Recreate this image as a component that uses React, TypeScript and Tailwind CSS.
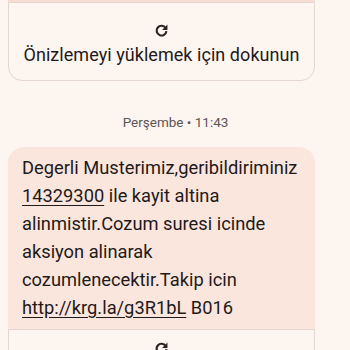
const RefreshIcon = () => (
  <svg width="15" height="15" viewBox="0 0 24 24" fill="none">
    <path
      d="M18.6 8A7.8 7.8 0 1 0 19.8 13"
      stroke="#2b2220"
      strokeWidth="3.4"
      strokeLinecap="butt"
    />
    <path d="M21.5 2.5v8.5h-8.5z" fill="#2b2220" />
  </svg>
);

const App = () => {
  return (
    <div className="w-[350px] h-[350px] overflow-hidden bg-[#fdf5f0] font-['Roboto',sans-serif] text-[#1f1a19]">
      <div className="w-[307px] ml-2">
        <div className="h-[2px] bg-[#f6dcd3]" />
        <div className="h-[79px] border border-[#e6d6d0] rounded-b-[14px] flex flex-col items-center pt-[20px]">
          <RefreshIcon />
          <p className="mt-[6px] text-[18px] leading-[22px] tracking-[0.05px]">Önizlemeyi yüklemek için dokunun</p>
        </div>
        <p className="mt-[32px] text-center text-[13.5px] leading-[18px] text-[#5e5654] pl-[28px]">Perşembe • 11:43</p>
        <div className="mt-[16px] bg-[#fae6dd] rounded-t-[16px] pl-[14px] pr-2 pt-[7px] pb-[7px] text-[18.3px] leading-[28px]">
          <p>Degerli Musterimiz,geribildiriminiz</p>
          <p>
            <span className="underline underline-offset-[3px]">14329300</span> ile kayit altina
          </p>
          <p>alinmistir.Cozum suresi icinde</p>
          <p>aksiyon alinarak</p>
          <p>cozumlenecektir.Takip icin</p>
          <p>
            <span className="underline underline-offset-[3px]">http://krg.la/g3R1bL</span> B016
          </p>
        </div>
        <div className="h-[40px] border border-[#e6d6d0] flex justify-center pt-[11px]">
          <RefreshIcon />
        </div>
      </div>
    </div>
  );
};

export default App;
